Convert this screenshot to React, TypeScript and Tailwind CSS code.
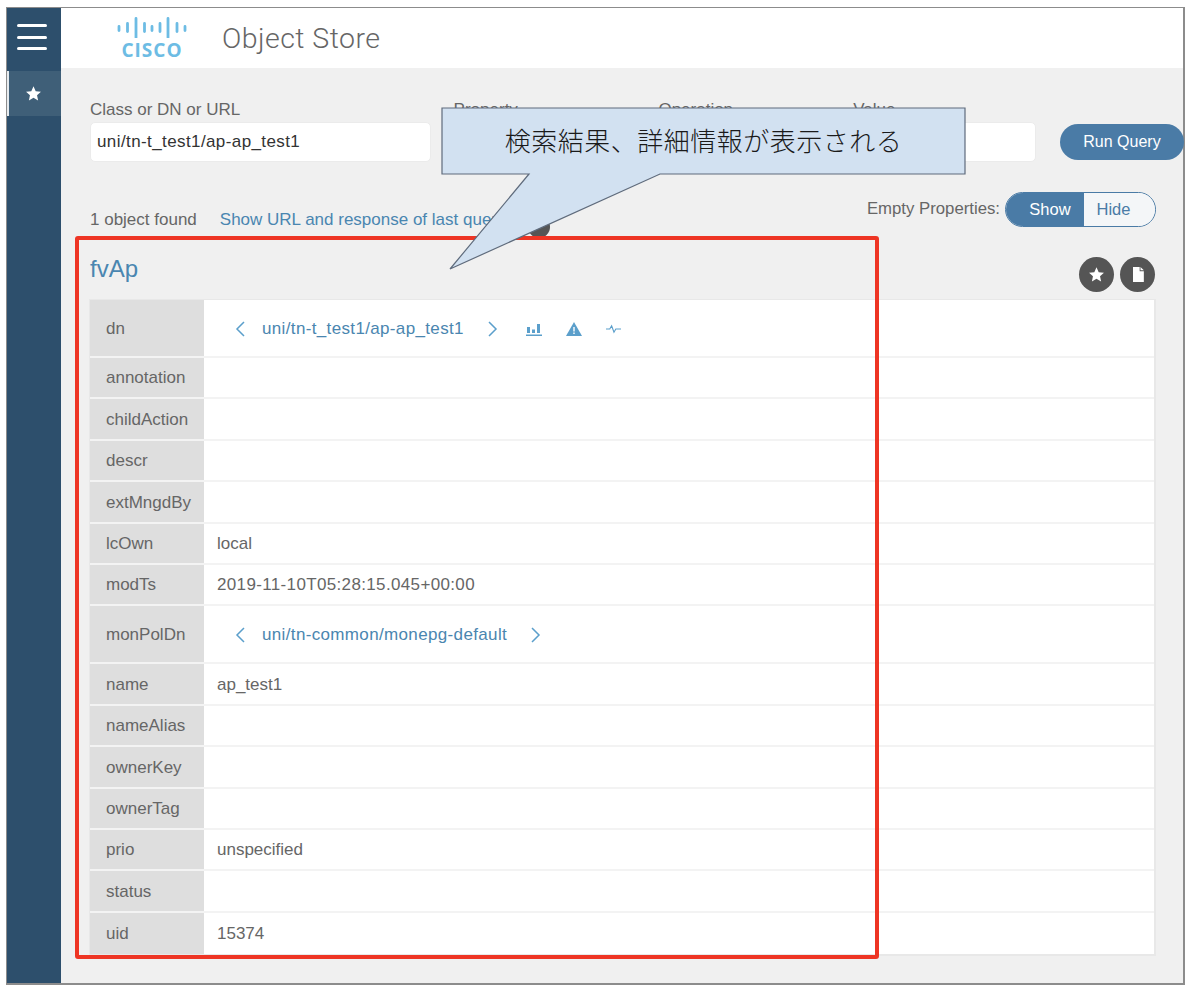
const rows = [
  { name: "dn", links: "uni/tn-t_test1/ap-ap_test1", tall: true, icons: true },
  { name: "annotation" },
  { name: "childAction" },
  { name: "descr" },
  { name: "extMngdBy" },
  { name: "lcOwn", value: "local" },
  { name: "modTs", value: "2019-11-10T05:28:15.045+00:00", wide: true },
  { name: "monPolDn", links: "uni/tn-common/monepg-default", tall: true },
  { name: "name", value: "ap_test1" },
  { name: "nameAlias" },
  { name: "ownerKey" },
  { name: "ownerTag" },
  { name: "prio", value: "unspecified" },
  { name: "status" },
  { name: "uid", value: "15374" },
];

const StarIcon = ({ className }: { className: string }) => (
  <svg viewBox="0 0 24 24" className={className} fill="currentColor">
    <path d="M12 1.8l3.1 6.9 7.4.8-5.5 5 1.5 7.4L12 18.1l-6.5 3.8L7 14.5l-5.500-5 7.400-.8z" />
  </svg>
);

const Chevron = ({ left }: { left?: boolean }) => (
  <svg viewBox="0 0 12 18" className="w-[12px] h-[18px]" fill="none" stroke="#5b9fcb" strokeWidth="1.5">
    <path d={left ? "M10 2L3 9l7 7" : "M2 2l7 7-7 7"} />
  </svg>
);

const CiscoLogo = () => (
  <div className="flex flex-col items-center w-[70px]">
    <svg viewBox="0 0 70 21" className="w-[70px] h-[21px]" stroke="#6dbce4" strokeWidth="2.8" strokeLinecap="round">
      <path d="M2 9.500v4M10.500 6.500v8M19 1.500v19M27.500 6.500v8M35 9.500v4M43 6.500v8M51 1.500v19M60 6.500v8M68 9.500v4" />
    </svg>
    <span className="mt-[3px] text-[19px] leading-[19px] font-bold tracking-[1px] text-[#6dbce4] font-['Open_Sans','Liberation_Sans',sans-serif]">
      CISCO
    </span>
  </div>
);

const Field = ({ label, className }: { label: string; className: string }) => (
  <div className={className}>
    <div className="text-[17px] leading-[18px] text-[#666] mb-[3px]">{label}</div>
    <div className="h-[40px] bg-white rounded-[5px] border border-[#ebebeb]" />
  </div>
);

export default function App() {
  return (
    <div className="relative w-[1200px] h-[990px] bg-white pl-[6px] pt-[7px] font-['Liberation_Sans',sans-serif] overflow-hidden">
      <div className="flex w-[1179px] h-[978px] border border-[#8c8c8c] border-b-2 border-r-2">
        <aside className="w-[54px] shrink-0 bg-[#2d4f6c]">
          <div className="h-[63px] flex flex-col gap-[8.500px] pt-[16px] pl-[10px]">
            <div className="w-[30px] h-[3px] rounded-full bg-white" />
            <div className="w-[30px] h-[3px] rounded-full bg-white" />
            <div className="w-[30px] h-[3px] rounded-full bg-white" />
          </div>
          <div className="h-[45px] bg-[#3f5f78] border-l-2 border-[#e6ebef] flex items-center justify-center pr-[4px] text-white">
            <StarIcon className="w-[17px] h-[17px]" />
          </div>
        </aside>

        <main className="flex-1 flex flex-col bg-[#f0f0f0] min-w-0">
          <header className="h-[60px] bg-white shrink-0 flex items-center pl-[56px]">
            <CiscoLogo />
            <h1 className="ml-[35px] pt-[2px] text-[28.500px] text-[#666] font-['Roboto',sans-serif] font-light tracking-[0.450px]">
              Object Store
            </h1>
          </header>

          <div className="flex-1 pl-[28px] pr-[27px] pt-[33px]">
            <div className="flex items-end pl-[1px]">
              <div className="w-[341px]">
                <div className="text-[17px] leading-[18px] text-[#666] mb-[3px]">Class or DN or URL</div>
                <div className="h-[40px] bg-white rounded-[5px] border border-[#ebebeb] flex items-center pl-[6px] text-[17px] text-[#333] tracking-[0.400px]">
                  uni/tn-t_test1/ap-ap_test1
                </div>
              </div>
              <Field label="Property" className="w-[183px] ml-[23px]" />
              <Field label="Operation" className="w-[173px] ml-[22px]" />
              <Field label="Value" className="w-[183px] ml-[22px]" />
              <button className="w-[124px] h-[36px] ml-[24px] -mr-[28px] mb-[2px] shrink-0 rounded-full bg-[#4a7ba6] text-white text-[16px]">
                Run Query
              </button>
            </div>

            <div className="flex items-center justify-between mt-[29px] h-[36px]">
              <div className="flex items-center gap-[23px] pl-[1px] pt-[22px] text-[17px]">
                <span className="text-[#666]">1 object found</span>
                <span className="text-[#4a86b0]">Show URL and response of last query</span>
              </div>
              <div className="flex items-center">
                <span className="text-[16.750px] text-[#666] mr-[5px]">Empty Properties:</span>
                <div className="flex h-[35px] w-[151px] rounded-full border border-[#4a7ba6] overflow-hidden text-[16.500px]">
                  <span className="w-[78px] bg-[#4a7ba6] text-white flex items-center justify-center pl-[10px]">Show</span>
                  <span className="flex-1 bg-[#f4f6f8] text-[#4a7ba6] flex items-center justify-center pr-[12px]">Hide</span>
                </div>
              </div>
            </div>

            <div className="flex items-end justify-between mt-[9px] h-[63px]">
              <h2 className="text-[24px] leading-[26px] text-[#4a86b0] pl-[1px] pb-[17px]">fvAp</h2>
              <div className="flex gap-[6px] pb-[7px] pr-[1px]">
                <span className="w-[35px] h-[35px] rounded-full bg-[#555] text-white flex items-center justify-center">
                  <StarIcon className="w-[17px] h-[17px]" />
                </span>
                <span className="w-[35px] h-[35px] rounded-full bg-[#555] text-white flex items-center justify-center">
                  <svg viewBox="0 0 14 18" className="w-[12px] h-[15px]" fill="currentColor">
                    <path d="M1 0h8v5h5v13H1zM10 0l4 4h-4z" />
                  </svg>
                </span>
              </div>
            </div>

            <div className="bg-white border border-[#e8e8e8] border-b-2 border-r-2">
              {rows.map((row) => (
                <div
                  key={row.name}
                  className={`flex border-b-2 border-[#f3f3f3] last:border-b-0 ${row.tall ? "h-[58px]" : "h-[41.400px]"}`}
                >
                  <div className="w-[114px] shrink-0 bg-[#dedede] mr-[2px] flex items-center pl-[16px] pt-[1px] text-[17px] text-[#666]">
                    {row.name}
                  </div>
                  <div className={`flex items-center pl-[11px] pt-[1px] text-[17px] text-[#666] ${row.wide ? "tracking-[0.350px]" : ""}`}>
                    {row.links ? (
                      <div className="flex items-center pl-[17px] text-[#4a86b0] tracking-[0.350px]">
                        <Chevron left />
                        <span className="ml-[16px] mr-[23px]">{row.links}</span>
                        <Chevron />
                        {row.icons && (
                          <div className="flex items-center ml-[27px] gap-[24px]">
                            <svg viewBox="0 0 16 14" className="w-[16px] h-[14px]" fill="#5b9fcb">
                              <path d="M1 5h3v6H1zM6 7.500h3V11H6zM11 2h3v9h-3zM0 12.500h16V14H0z" />
                            </svg>
                            <svg viewBox="0 0 16 14" className="w-[16px] h-[14px]">
                              <path d="M8 0l8 14H0z" fill="#5b9fcb" />
                              <path d="M7.300 5h1.400v4.500H7.300zM7.300 10.500h1.400V12H7.300z" fill="#fff" />
                            </svg>
                            <svg viewBox="0 0 16 10" className="w-[15px] h-[10px]" fill="none" stroke="#5b9fcb" strokeWidth="1.200">
                              <path d="M0 5h4l2-3.500 2.500 7L10.500 5H16" />
                            </svg>
                          </div>
                        )}
                      </div>
                    ) : (
                      row.value
                    )}
                  </div>
                </div>
              ))}
            </div>
          </div>
        </main>
      </div>

      {/* dark tip hidden behind the callout */}
      <div className="absolute left-[528px] top-[216px] w-[22px] h-[22px] rounded-full bg-[#555]" />

      {/* red highlight box */}
      <div className="absolute left-[75px] top-[236px] w-[804px] h-[723px] border-4 border-[#ee3524] rounded-[3px]" />

      {/* callout */}
      <svg viewBox="0 0 526 164" className="absolute left-[441px] top-[107px] w-[526px] h-[164px]">
        <path
          d="M1 1H524V67H219L9 162 88 67H1Z"
          fill="#d2e1f1"
          stroke="#5f6b7c"
          strokeWidth="1.200"
        />
      </svg>
      <div className="absolute left-[442px] top-[108px] w-[523px] h-[66px] flex items-center justify-center pb-[4px] text-[26px] tracking-[0.500px] text-[#1a1a1a] font-['Noto_Sans_CJK_JP',sans-serif] font-light">
        検索結果、詳細情報が表示される
      </div>
    </div>
  );
}
